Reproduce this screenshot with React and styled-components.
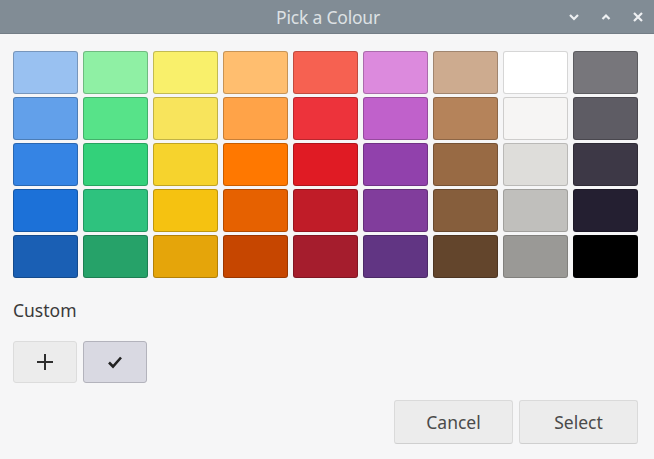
import React from 'react'
import styled, { createGlobalStyle } from 'styled-components'

const Global = createGlobalStyle`
    html, body {
        margin: 0;
        padding: 0;
        background: #f6f6f7;
    }
    * {
        box-sizing: border-box;
    }
`;

const Dialog = styled.div`
    width: 654px;
    height: 459px;
    display: flex;
    flex-direction: column;
    background: #f6f6f7;
    font-family: "Noto Sans", "Open Sans", sans-serif;
    color: #3a3a3a;
`;

const TitleBar = styled.div`
    height: 34px;
    flex-shrink: 0;
    background: #818c95;
    border-bottom: 1px solid #737d86;
    display: grid;
    grid-template-columns: 1fr auto 1fr;
    align-items: center;
`;

const Title = styled.div`
    grid-column: 2;
    color: #dde1e4;
    font-size: 17.5px;
    letter-spacing: -0.2px;
    padding-left: 2px;
`;

const WinButtons = styled.div`
    grid-column: 3;
    justify-self: end;
    display: flex;
    align-items: center;
    gap: 20px;
    padding-right: 10px;
`;

const WinButton = styled.svg`
    width: 12px;
    height: 12px;
    display: block;
`;

const Body = styled.div`
    flex: 1;
    display: flex;
    flex-direction: column;
    padding: 17px 16px 14px 13px;
`;

const Palette = styled.div`
    display: grid;
    grid-template-columns: repeat(9, 65px);
    grid-template-rows: repeat(5, 43px);
    column-gap: 5px;
    row-gap: 3px;
`;

const Swatch = styled.div`
    background: ${p => p.$color};
    border: 1px solid rgba(0, 0, 0, ${p => (p.$light ? 0.16 : 0.22)});
    border-radius: 3px;
`;

const Label = styled.div`
    font-size: 17.5px;
    margin-top: 20px;
    line-height: 24px;
`;

const CustomRow = styled.div`
    display: flex;
    gap: 6px;
    margin-top: 19px;
`;

const CustomButton = styled.div`
    width: 64px;
    height: 42px;
    display: flex;
    align-items: center;
    justify-content: center;
    border-radius: 3px;
    border: 1px solid ${p => (p.$selected ? '#b3b3bc' : '#dcdcdc')};
    background: ${p => (p.$selected ? '#d9d9e2' : '#ececec')};
`;

const Actions = styled.div`
    display: flex;
    justify-content: flex-end;
    gap: 6px;
    margin-top: 17px;
`;

const ActionButton = styled.button`
    width: 119px;
    height: 44px;
    border: 1px solid #dadada;
    border-bottom-color: #cfcfcf;
    border-radius: 3px;
    background: #ececec;
    font-family: inherit;
    font-size: 17.5px;
    color: #4a4a4a;
    padding: 0;
`;

const columns = [
    ['#99c1f1', '#62a0ea', '#3584e4', '#1c71d8', '#1a5fb4'],
    ['#8ff0a4', '#57e389', '#33d17a', '#2ec27e', '#26a269'],
    ['#f9f06b', '#f8e45c', '#f6d32d', '#f5c211', '#e5a50a'],
    ['#ffbe6f', '#ffa348', '#ff7800', '#e66100', '#c64600'],
    ['#f66151', '#ed333b', '#e01b24', '#c01c28', '#a51d2d'],
    ['#dc8add', '#c061cb', '#9141ac', '#813d9c', '#613583'],
    ['#cdab8f', '#b5835a', '#986a44', '#865e3c', '#63452c'],
    ['#ffffff', '#f6f5f4', '#deddda', '#c0bfbc', '#9a9996'],
    ['#77767b', '#5e5c64', '#3d3846', '#241f31', '#000000'],
];

function App() {
    const cells = [];
    for (let r = 0; r < 5; r++) {
        for (let c = 0; c < 9; c++) {
            cells.push({ color: columns[c][r], light: c === 7 });
        }
    }

    return (
        <Dialog>
            <Global />
            <TitleBar>
                <Title>Pick a Colour</Title>
                <WinButtons>
                    <WinButton viewBox="0 0 12 12">
                        <path d="M2 4 L6 8 L10 4" stroke="#eef0f2" strokeWidth="2.2" fill="none" />
                    </WinButton>
                    <WinButton viewBox="0 0 12 12">
                        <path d="M2.5 8 L6 4.5 L9.5 8" stroke="#eef0f2" strokeWidth="2.2" fill="none" />
                    </WinButton>
                    <WinButton viewBox="0 0 12 12">
                        <path d="M2 2 L10 10 M10 2 L2 10" stroke="#eef0f2" strokeWidth="2.2" fill="none" />
                    </WinButton>
                </WinButtons>
            </TitleBar>
            <Body>
                <Palette>
                    {cells.map((cell, i) => (
                        <Swatch key={i} $color={cell.color} $light={cell.light} />
                    ))}
                </Palette>
                <Label>Custom</Label>
                <CustomRow>
                    <CustomButton>
                        <svg width="18" height="18" viewBox="0 0 18 18">
                            <path d="M9 1 V17 M1 9 H17" stroke="#2e2e2e" strokeWidth="2" />
                        </svg>
                    </CustomButton>
                    <CustomButton $selected>
                        <svg width="16" height="14" viewBox="0 0 16 14">
                            <path d="M2 7.5 L6 11.5 L14 2.5" stroke="#222" strokeWidth="2.6" fill="none" />
                        </svg>
                    </CustomButton>
                </CustomRow>
                <Actions>
                    <ActionButton>Cancel</ActionButton>
                    <ActionButton>Select</ActionButton>
                </Actions>
            </Body>
        </Dialog>
    )
}

export default App
